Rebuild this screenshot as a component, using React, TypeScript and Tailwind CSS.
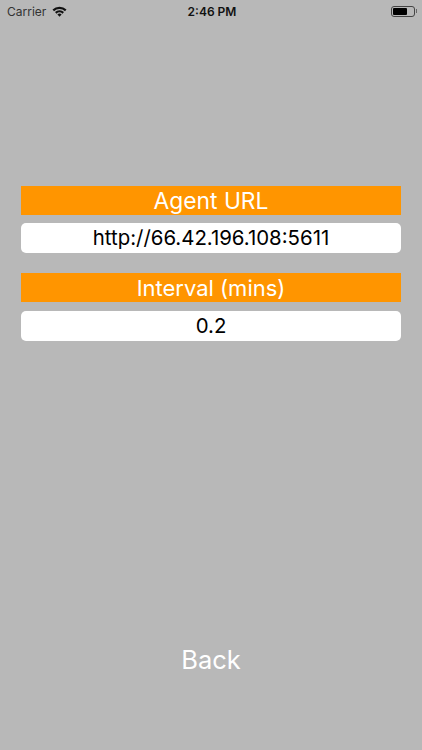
export default function App() {
  return (
    <div className="w-[422px] h-[750px] bg-[#b8b8b8] flex flex-col overflow-hidden font-['Inter','Liberation_Sans',sans-serif]">
      {/* status bar */}
      <div className="h-[22px] flex items-center justify-between pl-[7px] pr-[5px] text-[#111] relative">
        <div className="flex items-center gap-[6px]">
          <span className="text-[12px] text-[#333] pt-[1px]">Carrier</span>
          <svg width="15" height="11" viewBox="0 0 15 11">
            <path d="M0.5 3.6 A10 10 0 0 1 14.5 3.6 L13 5.2 A8 8 0 0 0 2 5.2 Z" fill="#111" />
            <path d="M3 6.1 A6.5 6.5 0 0 1 12 6.1 L10.5 7.7 A4.4 4.4 0 0 0 4.5 7.7 Z" fill="#111" />
            <path d="M5.4 8.6 A3 3 0 0 1 9.6 8.6 L7.5 10.8 Z" fill="#111" />
          </svg>
        </div>
        <span className="absolute left-[2px] right-0 text-center text-[12px] font-semibold pt-[1px]">2:46 PM</span>
        <div className="flex items-center">
          <div className="w-[24px] h-[11px] border border-[#444] rounded-[3px] p-[1px]">
            <div className="w-[14px] h-full bg-black rounded-[1px]" />
          </div>
          <div className="w-[1px] h-[4px] ml-[1px] bg-[#666]" />
        </div>
      </div>

      {/* form */}
      <div className="mt-[164px] px-[21px] flex flex-col">
        <div className="h-[29px] pt-[2px] bg-[#ff9500] text-white text-[22.8px] flex items-center justify-center">Agent URL</div>
        <div className="h-[30px] mt-[8px] pt-[1px] bg-white rounded-[5px] text-black text-[20.4px] flex items-center justify-center">http://66.42.196.108:5611</div>
        <div className="h-[29px] mt-[20px] pt-[2px] bg-[#ff9500] text-white text-[22px] flex items-center justify-center">Interval (mins)</div>
        <div className="h-[30px] mt-[9px] pt-[1px] bg-white rounded-[5px] text-black text-[20.4px] flex items-center justify-center">0.2</div>
      </div>

      <div className="mt-[301px] text-center text-white text-[25.5px] leading-[36px]">Back</div>
    </div>
  )
}
